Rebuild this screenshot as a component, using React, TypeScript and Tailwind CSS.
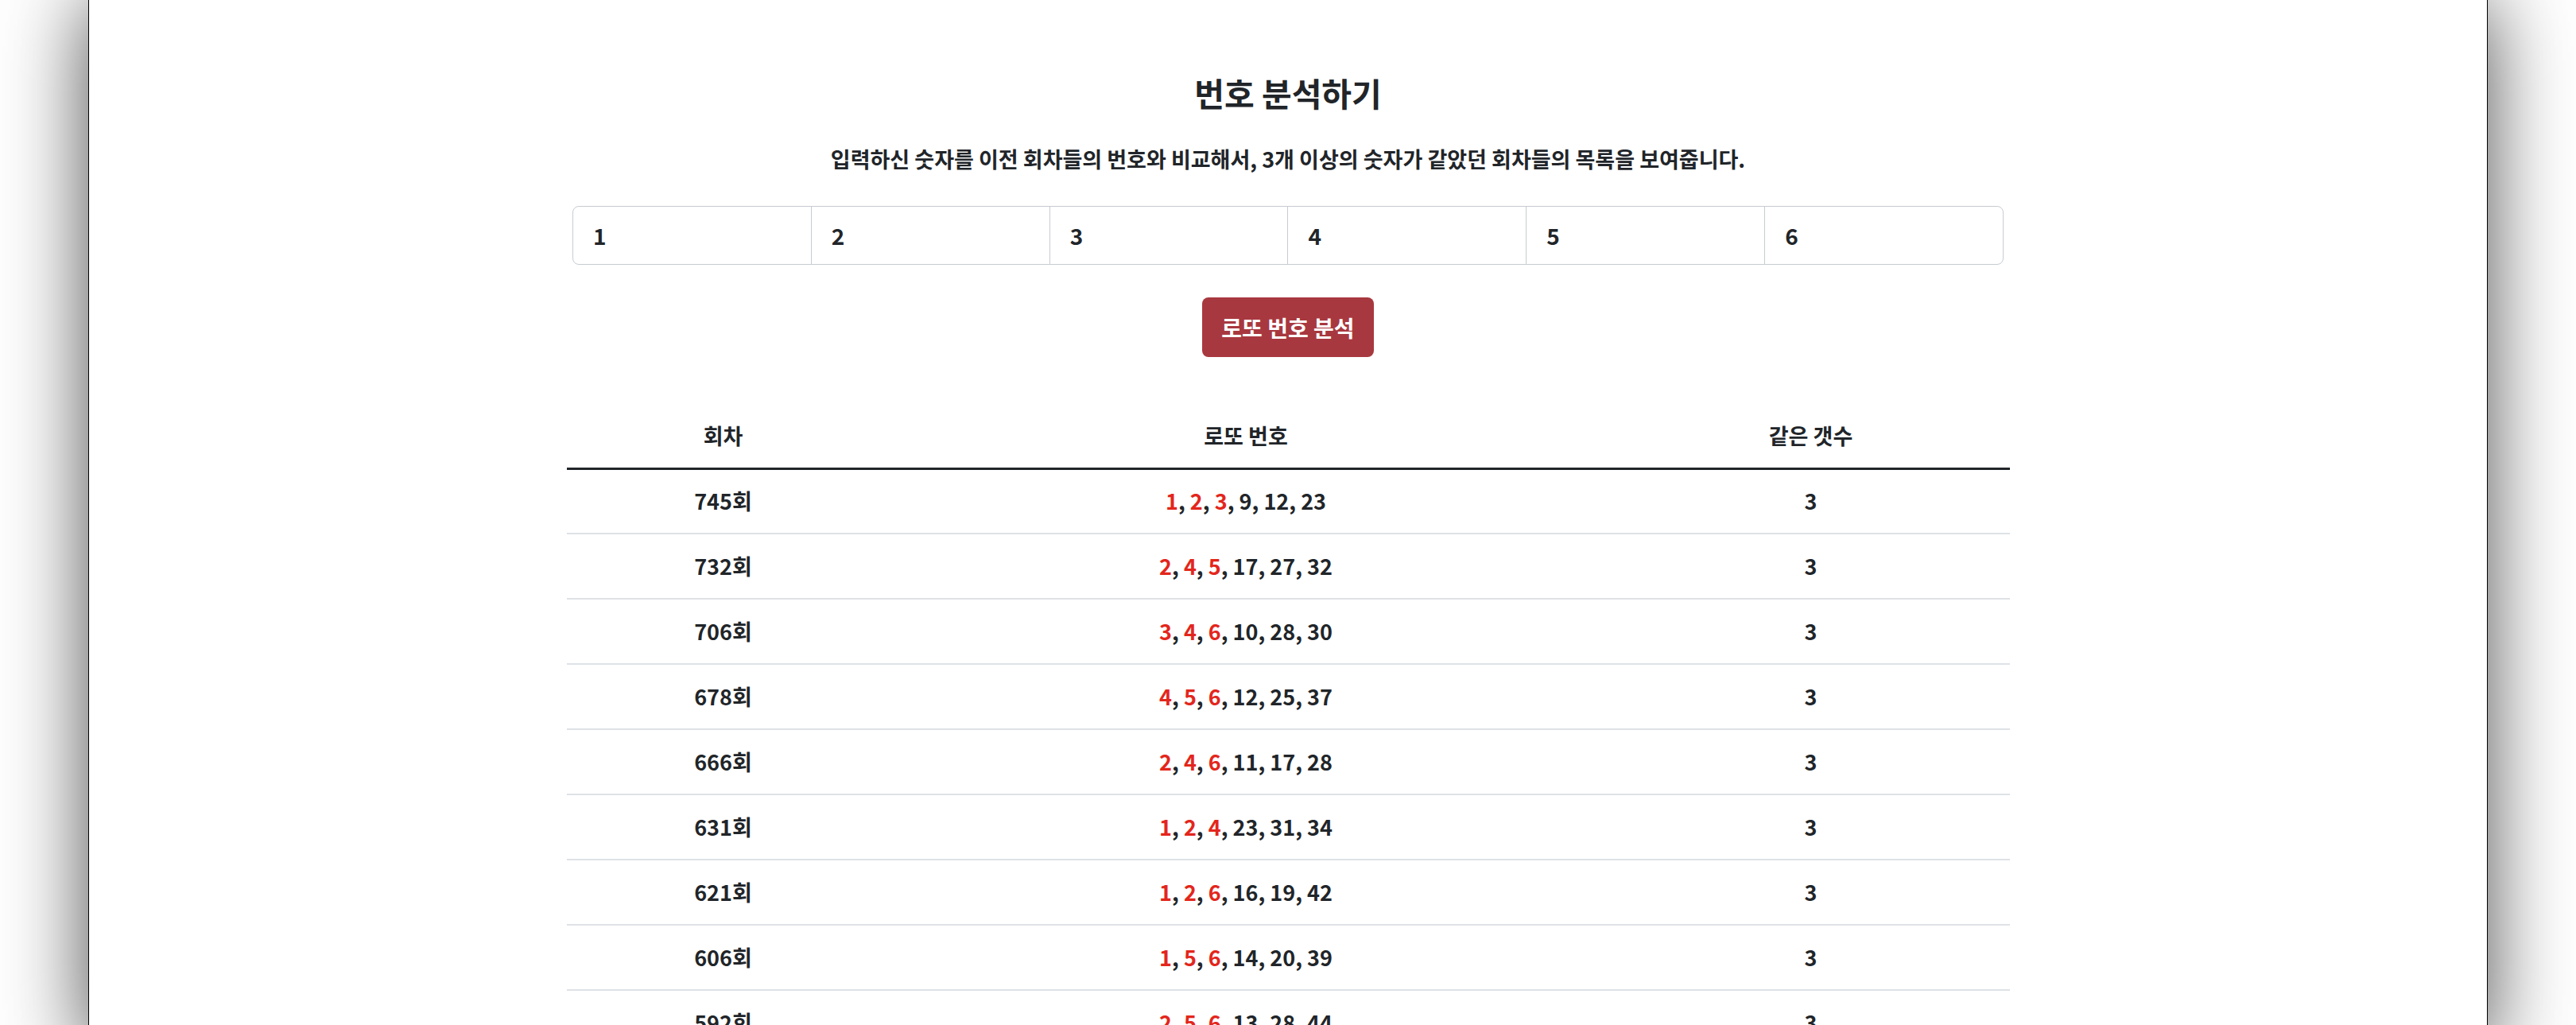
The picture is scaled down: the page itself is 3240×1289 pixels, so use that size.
import { useState } from "react";

type Round = {
    round: number;
    hits: number[];
    rest: number[];
};

const rounds: Round[] = [
    { round: 745, hits: [1, 2, 3], rest: [9, 12, 23] },
    { round: 732, hits: [2, 4, 5], rest: [17, 27, 32] },
    { round: 706, hits: [3, 4, 6], rest: [10, 28, 30] },
    { round: 678, hits: [4, 5, 6], rest: [12, 25, 37] },
    { round: 666, hits: [2, 4, 6], rest: [11, 17, 28] },
    { round: 631, hits: [1, 2, 4], rest: [23, 31, 34] },
    { round: 621, hits: [1, 2, 6], rest: [16, 19, 42] },
    { round: 606, hits: [1, 5, 6], rest: [14, 20, 39] },
    { round: 592, hits: [2, 5, 6], rest: [13, 28, 44] },
];

export default function App() {

    const [numbers, setNumbers] =
        useState<string[]>(["1", "2", "3", "4", "5", "6"]);

    const changeNumber = (index: number, value: string) => {
        const next = [...numbers];
        next[index] = value;
        setNumbers(next);
    };

    return (

        <div
            className="h-screen overflow-hidden bg-white text-[#212529]"
            style={{ fontFamily: '"Noto Sans CJK KR", "Noto Sans", sans-serif' }}
        >

            <div className="mx-[111px] min-h-screen bg-white border-x border-black shadow-[0_0_100px_rgba(0,0,0,0.7)] pt-[92px]">

                <h1 className="h-[48px] text-center text-[41px] leading-[48px] font-bold">
                    번호 분석하기
                </h1>

                <p className="mt-[40px] text-center text-[27px] leading-[40px] font-bold">
                    입력하신 숫자를 이전 회차들의 번호와 비교해서, 3개 이상의 숫자가 같았던 회차들의 목록을 보여줍니다.
                </p>

                {/* number inputs */}
                <div className="mx-auto mt-[39px] flex h-[74px] w-[1800px] overflow-hidden rounded-[8px] border border-[#c6ccd2]">
                    {numbers.map((n, i) => (
                        <input
                            key={i}
                            value={n}
                            onChange={(e) => changeNumber(i, e.target.value)}
                            className={
                                i === 0
                                    ? "min-w-0 flex-1 px-[25px] text-[28px] font-bold outline-none"
                                    : "min-w-0 flex-1 border-l border-[#c6ccd2] px-[25px] text-[28px] font-bold outline-none"
                            }
                        />
                    ))}
                </div>

                <div className="mt-[41px] flex justify-center">
                    <button className="h-[75px] w-[216px] rounded-[8px] bg-[#a8383f] text-[28px] font-bold text-white">
                        로또 번호 분석
                    </button>
                </div>

                {/* result table */}
                <table className="mx-auto mt-[60px] w-[1815px] table-fixed border-collapse text-[27px] font-bold">

                    <thead>
                        <tr className="h-[80px] border-b-[3px] border-[#212529]">
                            <th className="w-[394px] font-bold">회차</th>
                            <th className="w-[921px] font-bold">로또 번호</th>
                            <th className="w-[500px] font-bold">같은 갯수</th>
                        </tr>
                    </thead>

                    <tbody>
                        {rounds.map((r) => (
                            <tr key={r.round} className="h-[82px] border-b-2 border-[#dee2e6]">
                                <td className="text-center">{r.round}회</td>
                                <td className="text-center">
                                    {r.hits.map((h) => (
                                        <span key={h}>
                                            <span className="text-[#e3261c]">{h}</span>,{" "}
                                        </span>
                                    ))}
                                    {r.rest.join(", ")}
                                </td>
                                <td className="text-center">{r.hits.length}</td>
                            </tr>
                        ))}
                    </tbody>

                </table>

            </div>

        </div>

    );
}
